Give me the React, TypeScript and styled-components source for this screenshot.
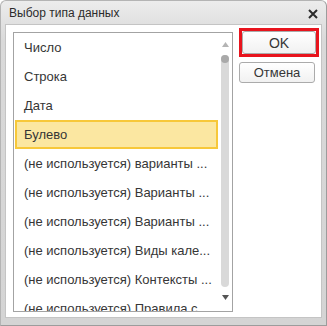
import React from "react";
import styled, { createGlobalStyle } from "styled-components";

const GlobalStyle = createGlobalStyle`
  html, body {
    margin: 0;
    padding: 0;
    background: #ffffff;
  }
  body {
    font-family: "Liberation Sans", Arial, sans-serif;
  }
`;

const Window = styled.div`
  width: 327px;
  height: 326px;
  box-sizing: border-box;
  display: flex;
  flex-direction: column;
  border-radius: 6px 6px 0 0;
  border: 1px solid #b4b4b4;
  border-right-color: #9c9c9c;
  border-bottom-color: #9c9c9c;
  background: linear-gradient(#ececec, #d9d9d9 40px, #d4d4d4);
  padding: 0 4px 7px 4px;
  overflow: hidden;
`;

const TitleBar = styled.div`
  height: 23px;
  display: flex;
  align-items: center;
  justify-content: space-between;
  padding: 0 4px 0 4px;
  flex-shrink: 0;
`;

const Title = styled.span`
  font-size: 12px;
  color: #2b2b2b;
  margin-top: 1px;
`;

const Close = styled.svg`
  width: 10px;
  height: 10px;
  margin-top: 3px;
`;

const Client = styled.div`
  flex: 1;
  background: #ffffff;
  border: 1px solid #c4c4c4;
  display: flex;
  align-items: flex-start;
  gap: 6px;
  padding: 7px 3px 0 7px;
`;

const ListBox = styled.div`
  width: 220px;
  height: 280px;
  box-sizing: border-box;
  border: 1px solid #a3a3a3;
  display: flex;
  flex-shrink: 0;
`;

const Items = styled.div`
  flex: 1;
  overflow: hidden;
  padding-left: 1px;
`;

const Item = styled.div<{ $selected?: boolean }>`
  height: 29px;
  box-sizing: border-box;
  display: flex;
  align-items: center;
  padding-left: 7px;
  font-size: 13px;
  color: #363636;
  white-space: nowrap;
  background: ${(p) => (p.$selected ? "#fbe7a1" : "transparent")};
  border: 2px solid ${(p) => (p.$selected ? "#f7c83a" : "transparent")};
`;

const ScrollBar = styled.div`
  width: 14px;
  display: flex;
  flex-direction: column;
  align-items: center;
  padding-top: 9px;
`;

const Arrow = styled.svg<{ $dim?: boolean }>`
  width: 7px;
  height: 5px;
  fill: ${(p) => (p.$dim ? "#b4b4b4" : "#555555")};
`;

const Track = styled.div`
  width: 8px;
  height: 232px;
  margin: 8px 0 8px;
  border-radius: 4px;
  background: #d9d9d9;
  display: flex;
  flex-direction: column;
`;

const Thumb = styled.div`
  width: 8px;
  height: 8px;
  border-radius: 4px;
  background: #a9a9a9;
`;

const Buttons = styled.div`
  display: flex;
  flex-direction: column;
  gap: 5px;
  margin-top: -4px;
`;

const Focus = styled.div`
  border: 3px solid #e8141d;
  width: 80px;
  height: 29px;
  box-sizing: border-box;
  display: flex;
`;

const Button = styled.div<{ $w: number; $h: number; $size?: number }>`
  width: ${(p) => p.$w}px;
  height: ${(p) => p.$h}px;
  box-sizing: border-box;
  border: 1px solid #ababab;
  border-radius: 3px;
  background: linear-gradient(#ffffff, #f1f1f1);
  display: flex;
  align-items: center;
  justify-content: center;
  font-size: ${(p) => p.$size ?? 13}px;
  color: #363636;
`;

const items = [
  "Число",
  "Строка",
  "Дата",
  "Булево",
  "(не используется) варианты ...",
  "(не используется) Варианты ...",
  "(не используется) Варианты ...",
  "(не используется) Виды кале...",
  "(не используется) Контексты ...",
  "(не используется) Правила с...",
];

export default function App() {
  return (
    <>
      <GlobalStyle />
      <Window>
        <TitleBar>
          <Title>Выбор типа данных</Title>
          <Close viewBox="0 0 10 10">
            <path d="M1 1 L9 9 M9 1 L1 9" stroke="#2b2b2b" strokeWidth="2" />
          </Close>
        </TitleBar>
        <Client>
          <ListBox>
            <Items>
              {items.map((t, i) => (
                <Item key={i} $selected={t === "Булево"}>
                  {t}
                </Item>
              ))}
            </Items>
            <ScrollBar>
              <Arrow $dim viewBox="0 0 7 5">
                <path d="M3.5 0 L7 5 L0 5 Z" />
              </Arrow>
              <Track>
                <Thumb />
              </Track>
              <Arrow viewBox="0 0 7 5">
                <path d="M0 0 L7 0 L3.5 5 Z" />
              </Arrow>
            </ScrollBar>
          </ListBox>
          <Buttons>
            <Focus>
              <Button $w={74} $h={23} $size={14}>OK</Button>
            </Focus>
            <Button $w={76} $h={21}>Отмена</Button>
          </Buttons>
        </Client>
      </Window>
    </>
  );
}
